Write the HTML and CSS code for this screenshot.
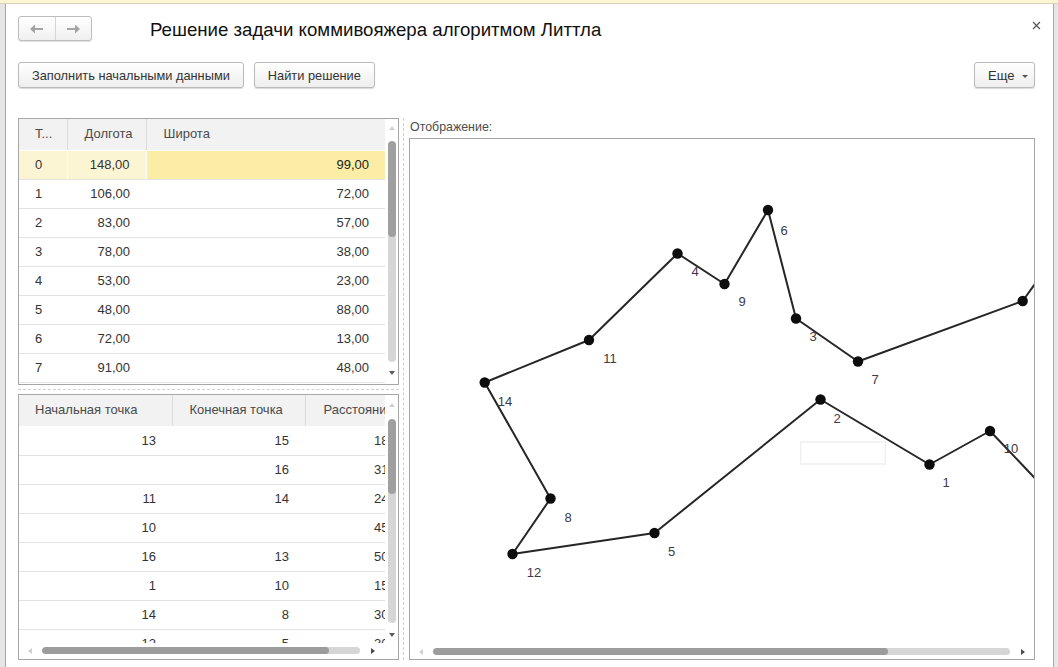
FILE: index.html
```html
<!DOCTYPE html>
<html lang="ru">
<head>
<meta charset="utf-8">
<title>Решение задачи коммивояжера алгоритмом Литтла</title>
<link rel="stylesheet" href="styles.css">
</head>
<body>
<div class="topstrip"></div>
<div class="win">
  <div class="titlebar">
    <div class="nav">
      <span class="nav-half">
        <svg width="14" height="10" viewBox="0 0 14 10"><polygon points="0,5 5,0.5 5,9.5" fill="#a3a3a3"/><rect x="4" y="4" width="9" height="2" fill="#a3a3a3"/></svg>
      </span>
      <span class="nav-half nav-right">
        <svg width="14" height="10" viewBox="0 0 14 10"><polygon points="14,5 9,0.5 9,9.5" fill="#a3a3a3"/><rect x="1" y="4" width="9" height="2" fill="#a3a3a3"/></svg>
      </span>
    </div>
    <h1 class="title">Решение задачи коммивояжера алгоритмом Литтла</h1>
    <div class="close">
      <svg width="9" height="9" viewBox="0 0 9 9"><path d="M1 1 L8 8 M8 1 L1 8" stroke="#555" stroke-width="1.2" fill="none"/></svg>
    </div>
  </div>

  <div class="toolbar">
    <button class="btn">Заполнить начальными данными</button>
    <button class="btn">Найти решение</button>
    <button class="btn btn-more">Еще <span class="caret"></span></button>
  </div>

  <div class="main">
    <div class="leftcol">
      <div class="grid grid-top">
        <div class="grid-body">
          <div class="grid-clip">
            <table class="tbl tbl-points">
              <colgroup><col class="c-n"><col class="c-lon"><col class="c-lat"></colgroup>
              <thead>
                <tr><th>Т...</th><th>Долгота</th><th>Широта</th></tr>
              </thead>
              <tbody>
                <tr class="sel"><td>0</td><td class="num">148,00</td><td class="num cur">99,00</td></tr>
                <tr><td>1</td><td class="num">106,00</td><td class="num">72,00</td></tr>
                <tr><td>2</td><td class="num">83,00</td><td class="num">57,00</td></tr>
                <tr><td>3</td><td class="num">78,00</td><td class="num">38,00</td></tr>
                <tr><td>4</td><td class="num">53,00</td><td class="num">23,00</td></tr>
                <tr><td>5</td><td class="num">48,00</td><td class="num">88,00</td></tr>
                <tr><td>6</td><td class="num">72,00</td><td class="num">13,00</td></tr>
                <tr><td>7</td><td class="num">91,00</td><td class="num">48,00</td></tr>
              </tbody>
            </table>
          </div>
          <div class="vscroll vs-top">
            <span class="arr arr-up"></span>
            <div class="track"><div class="thumb"></div></div>
            <span class="arr arr-down"></span>
          </div>
        </div>
      </div>

      <div class="hsplit"></div>

      <div class="grid grid-bottom">
        <div class="grid-body">
          <div class="grid-clip">
            <table class="tbl tbl-edges">
              <colgroup><col class="c-from"><col class="c-to"><col class="c-dist"></colgroup>
              <thead>
                <tr><th>Начальная точка</th><th>Конечная точка</th><th>Расстояние</th></tr>
              </thead>
              <tbody>
                <tr><td class="num">13</td><td class="num">15</td><td class="dist">18,00</td></tr>
                <tr><td class="num"></td><td class="num">16</td><td class="dist">31,00</td></tr>
                <tr><td class="num">11</td><td class="num">14</td><td class="dist">24,00</td></tr>
                <tr><td class="num">10</td><td class="num"></td><td class="dist">45,00</td></tr>
                <tr><td class="num">16</td><td class="num">13</td><td class="dist">50,00</td></tr>
                <tr><td class="num">1</td><td class="num">10</td><td class="dist">15,00</td></tr>
                <tr><td class="num">14</td><td class="num">8</td><td class="dist">30,00</td></tr>
                <tr><td class="num">12</td><td class="num">5</td><td class="dist">30,00</td></tr>
              </tbody>
            </table>
          </div>
          <div class="vscroll vs-bottom">
            <span class="arr arr-up"></span>
            <div class="track"><div class="thumb"></div></div>
            <span class="arr arr-down"></span>
          </div>
        </div>
        <div class="hscroll hs-grid">
          <span class="arr arr-left"></span>
          <div class="htrack"><div class="hthumb"></div></div>
          <span class="arr arr-right"></span>
        </div>
      </div>
    </div>

    <div class="vsplit"></div>

    <div class="rightcol">
      <div class="caption">Отображение:</div>
      <div class="canvas">
        <svg class="plot" width="624" height="520" viewBox="0 0 624 520">
          <rect x="390.7" y="303" width="84.6" height="22" fill="none" stroke="#efefef" stroke-width="1.5"/>
          <polyline fill="none" stroke="#262626" stroke-width="2" stroke-linejoin="round"
            points="630,138 612.7,162 448,222.5 386,179.5 358,71 314.5,145 267.5,114.5 179,201 74.7,243.5 140.5,359.5 102.5,415 244.5,394 410.5,260.5 519.5,325.5 580,292 640,355"/>
          <g fill="#0d0d0d">
            <circle cx="612.7" cy="162" r="5.2"/>
            <circle cx="448" cy="222.5" r="5.2"/>
            <circle cx="386" cy="179.5" r="5.2"/>
            <circle cx="358" cy="71" r="5.2"/>
            <circle cx="314.5" cy="145" r="5.2"/>
            <circle cx="267.5" cy="114.5" r="5.2"/>
            <circle cx="179" cy="201" r="5.2"/>
            <circle cx="74.7" cy="243.5" r="5.2"/>
            <circle cx="140.5" cy="359.5" r="5.2"/>
            <circle cx="102.5" cy="415" r="5.2"/>
            <circle cx="244.5" cy="394" r="5.2"/>
            <circle cx="410.5" cy="260.5" r="5.2"/>
            <circle cx="519.5" cy="325.5" r="5.2"/>
            <circle cx="580" cy="292" r="5.2"/>
          </g>
          <g class="lbl" fill="#3d3948" font-size="13" text-anchor="middle" dominant-baseline="central">
            <text x="374" y="91">6</text>
            <text x="285" y="132.5">4</text>
            <text x="332" y="162">9</text>
            <text x="403" y="197">3</text>
            <text x="465" y="240">7</text>
            <text x="200" y="219">11</text>
            <text x="95" y="262">14</text>
            <text x="158" y="378">8</text>
            <text x="124" y="433">12</text>
            <text x="261.5" y="412">5</text>
            <text x="427" y="279">2</text>
            <text x="536" y="343">1</text>
            <text x="601" y="309">10</text>
          </g>
        </svg>
        <div class="hscroll hs-canvas">
          <span class="arr arr-left"></span>
          <div class="htrack"><div class="hthumb"></div></div>
          <span class="arr arr-right"></span>
        </div>
      </div>
    </div>
  </div>
</div>
</body>
</html>
```
FILE: styles.css
```css
* { box-sizing: border-box; }
html, body { margin: 0; padding: 0; }
body {
  background: #e6e6e6;
  font-family: "Liberation Sans", Arial, sans-serif;
  color: #333;
  overflow: hidden;
  height: 667px;
}

.topstrip {
  height: 4px;
  background: #fdf6d3;
  border-bottom: 1px solid #d8d2b6;
}

.win {
  margin: 0 4px 0 5px;
  height: 663px;
  background: #fff;
  border-left: 1px solid #a8a8a8;
  border-right: 1px solid #a8a8a8;
  padding: 12px 18px 0 12px;
}

/* title bar */
.titlebar {
  display: flex;
  align-items: center;
  height: 25px;
}
.nav {
  display: flex;
  width: 74px;
  height: 25px;
  border: 1px solid #bcbcbc;
  border-radius: 3px;
  background: linear-gradient(#ffffff, #f0f0f0);
  box-shadow: 0 1px 1px rgba(0,0,0,0.12);
}
.nav-half {
  flex: 1;
  display: flex;
  align-items: center;
  justify-content: center;
}
.nav-right { border-left: 1px solid #d4d4d4; }
.title {
  margin: 0 0 0 58px;
  font-size: 18.65px;
  font-weight: normal;
  color: #111;
  line-height: 25px;
  padding-top: 2px;
}
.close {
  margin-left: auto;
  margin-right: -6px;
  align-self: flex-start;
  margin-top: 5px;
  display: flex;
}

/* toolbar */
.toolbar {
  display: flex;
  gap: 10px;
  margin-top: 21px;
  height: 26px;
}
.btn {
  height: 26px;
  border: 1px solid #bababa;
  border-radius: 3px;
  background: linear-gradient(#ffffff, #eeeeee);
  box-shadow: 0 1px 1px rgba(0,0,0,0.15);
  font-family: "Liberation Sans", Arial, sans-serif;
  font-size: 12.8px;
  color: #333;
  padding: 0 13px;
  cursor: default;
}
.btn-more {
  margin-left: auto;
  padding: 0 8px 0 13px;
  display: flex;
  align-items: center;
  gap: 8px;
  width: 61px;
  font-size: 13px;
}
.caret {
  width: 0; height: 0;
  border-left: 3px solid transparent;
  border-right: 3px solid transparent;
  border-top: 3px solid #555;
  margin-top: 2px;
}

/* main */
.main {
  display: flex;
  margin-top: 30px;
  height: 542px;
}
.leftcol {
  width: 381px;
  display: flex;
  flex-direction: column;
}
.vsplit {
  width: 1px;
  margin: 0 5px 0 4px;
  border-left: 1px dashed #cfcfcf;
  height: 542px;
}
.hsplit {
  height: 1px;
  margin: 4px 0 4px;
  border-top: 1px dashed #cfcfcf;
}
.rightcol {
  width: 626px;
  display: flex;
  flex-direction: column;
}

/* grids */
.grid {
  border: 1px solid #a6a6a6;
  display: flex;
  flex-direction: column;
  overflow: hidden;
}
.grid-top { height: 267px; }
.grid-bottom { height: 266px; }
.grid-body {
  display: flex;
  flex: 1;
  min-height: 0;
}
.grid-clip {
  width: 366px;
  overflow: hidden;
}
.tbl {
  border-collapse: collapse;
  table-layout: fixed;
  font-size: 13px;
  color: #333;
}
.tbl-points { width: 366px; }
.tbl-edges { width: 440px; }
.c-n { width: 48px; }
.c-lon { width: 79px; }
.c-lat { width: 239px; }
.c-from { width: 153px; }
.c-to { width: 133px; }
.c-dist { width: 154px; }

.tbl th {
  height: 31px;
  background: #f2f2f2;
  font-weight: normal;
  color: #4a4a4a;
  text-align: left;
  padding: 0 8px 1px 16px;
  border-bottom: 1px solid #ffffff;
  border-left: 1px solid #dcdcdc;
  white-space: nowrap;
  overflow: hidden;
}
.tbl th:first-child { border-left: none; }
.tbl-points th:nth-child(2) { padding-left: 17px; }
.tbl-points th:nth-child(3) { padding-left: 17px; }
.tbl-edges th:nth-child(2) { padding-left: 17px; }
.tbl-edges th:nth-child(3) { padding-left: 18px; }

.tbl td {
  height: 29px;
  padding: 0 16px;
  border-bottom: 1px solid #e3e3e3;
  white-space: nowrap;
  overflow: hidden;
}
.tbl td.num { text-align: right; }
.tbl td.dist { text-align: left; padding-left: 69px; }

.tbl tr.sel td {
  background: #fcf5d3;
  border-left: 1px solid #ffffff;
}
.tbl tr.sel td:first-child { border-left: none; }
.tbl tr.sel td.cur { background: #fbeda5; color: #222; }

/* vertical scrollbars */
.vscroll {
  width: 13px;
  display: flex;
  flex-direction: column;
  align-items: center;
}
.track {
  width: 8px;
  border-radius: 4px;
  background: #d6d6d6;
  overflow: hidden;
  margin-left: 1px;
}
.thumb {
  width: 8px;
  border-radius: 4px;
  background: #a0a0a0;
}
.arr { display: block; width: 0; height: 0; }
.arr-up {
  border-left: 3px solid transparent;
  border-right: 3px solid transparent;
  border-bottom: 4px solid #cfcfcf;
}
.arr-down {
  border-left: 3px solid transparent;
  border-right: 3px solid transparent;
  border-top: 4px solid #5a5a5a;
}
.vs-top .arr-up { margin-top: 7px; }
.vs-top .track { height: 221px; margin-top: 11px; }
.vs-top .thumb { height: 96px; }
.vs-top .arr-down { margin-top: 9px; }

.vs-bottom .arr-up { margin-top: 8px; }
.vs-bottom .track { height: 204px; margin-top: 12px; }
.vs-bottom .thumb { height: 75px; }
.vs-bottom .arr-down { margin-top: 10px; }

/* horizontal scrollbars */
.hscroll {
  display: flex;
  align-items: center;
  height: 16px;
}
.htrack {
  height: 7px;
  border-radius: 4px;
  background: #d6d6d6;
  overflow: hidden;
}
.hthumb {
  height: 7px;
  border-radius: 4px;
  background: #9c9c9c;
}
.arr-left {
  border-top: 3px solid transparent;
  border-bottom: 3px solid transparent;
  border-right: 4px solid #cfcfcf;
}
.arr-right {
  border-top: 3px solid transparent;
  border-bottom: 3px solid transparent;
  border-left: 4px solid #4a4a4a;
}
.hs-grid { width: 366px; padding-bottom: 1px; }
.hs-grid .arr-left { margin-left: 9px; }
.hs-grid .htrack { width: 318px; margin-left: 10px; }
.hs-grid .hthumb { width: 287px; }
.hs-grid .arr-right { margin-left: 11px; }

/* canvas */
.caption {
  height: 20px;
  font-size: 12.4px;
  color: #4d4d4d;
  padding: 2px 0 0 1px;
}
.canvas {
  position: relative;
  height: 522px;
  border: 1px solid #a6a6a6;
  overflow: hidden;
}
.plot {
  display: block;
  font-family: "Liberation Sans", Arial, sans-serif;
}
.hs-canvas {
  position: absolute;
  left: 0;
  right: 0;
  bottom: 0;
  height: 14px;
  padding-bottom: 1px;
}
.hs-canvas .arr-left { margin-left: 9px; }
.hs-canvas .htrack { width: 577px; margin-left: 10px; }
.hs-canvas .hthumb { width: 455px; }
.hs-canvas .arr-right { margin-left: 11px; }
```
